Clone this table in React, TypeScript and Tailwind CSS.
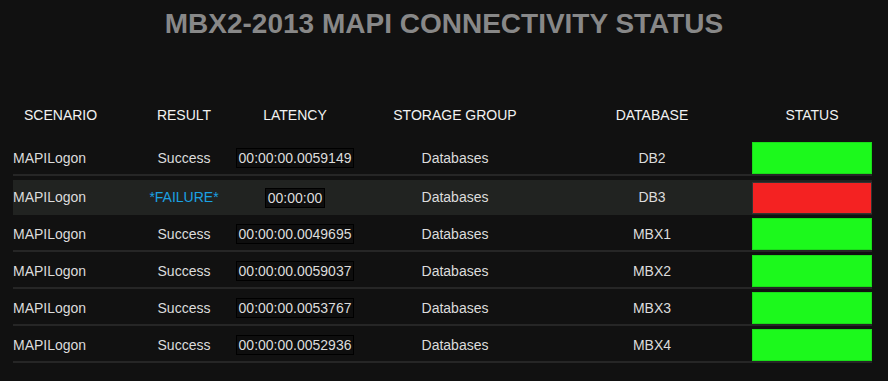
import React from 'react'

type Row = {
  scenario: string
  result: string
  latency: string
  group: string
  db: string
  ok: boolean
}

const rows: Row[] = [
  { scenario: 'MAPILogon', result: 'Success', latency: '00:00:00.0059149', group: 'Databases', db: 'DB2', ok: true },
  { scenario: 'MAPILogon', result: '*FAILURE*', latency: '00:00:00', group: 'Databases', db: 'DB3', ok: false },
  { scenario: 'MAPILogon', result: 'Success', latency: '00:00:00.0049695', group: 'Databases', db: 'MBX1', ok: true },
  { scenario: 'MAPILogon', result: 'Success', latency: '00:00:00.0059037', group: 'Databases', db: 'MBX2', ok: true },
  { scenario: 'MAPILogon', result: 'Success', latency: '00:00:00.0053767', group: 'Databases', db: 'MBX3', ok: true },
  { scenario: 'MAPILogon', result: 'Success', latency: '00:00:00.0052936', group: 'Databases', db: 'MBX4', ok: true },
]

// column widths: scenario, result, latency, storage group, database, status
const cols = 'grid grid-cols-[119px_104px_118px_202px_192px_124px]'

const Cells = ({ row }: { row: Row }) => (
  <>
    <div className="text-[#dcdcdc]">{row.scenario}</div>
    <div className={`text-center ${row.ok ? 'text-[#dcdcdc]' : 'text-[#1ba1e2]'}`}>{row.result}</div>
    <div className="flex justify-center">
      <span className="h-[20px] px-[2px] leading-[18px] border border-black bg-[#0e0e0e] text-[#dcdcdc]">
        {row.latency}
      </span>
    </div>
    <div className="text-center text-[#dcdcdc]">{row.group}</div>
    <div className="text-center text-[#dcdcdc]">{row.db}</div>
    <div className="flex justify-end">
      {row.ok ? (
        <div className="w-[120px] h-[32px] bg-[#1cf91c] border border-[#19dc19]" />
      ) : (
        <div className="w-[120px] h-[32px] bg-[#f42222] border border-[#333]" />
      )}
    </div>
  </>
)

export default function App() {
  return (
    <div
      className="w-[888px] h-[381px] bg-[#111111] overflow-hidden text-[14px]"
      style={{ fontFamily: '"Liberation Sans", Arial, sans-serif' }}
    >
      <h1 className="pt-[8px] text-center text-[28px] leading-[32px] font-bold text-[#888888]">
        MBX2-2013 MAPI CONNECTIVITY STATUS
      </h1>

      <div className="ml-[13px] w-[859px] mt-[67px]">
        <div className={`${cols} leading-[16px] pb-[16px] text-[#f2f2f2]`}>
          <div className="pl-[11px]">SCENARIO</div>
          <div className="text-center">RESULT</div>
          <div className="text-center">LATENCY</div>
          <div className="text-center">STORAGE GROUP</div>
          <div className="text-center">DATABASE</div>
          <div className="text-center pl-[4px]">STATUS</div>
        </div>

        {rows.map((row, i) =>
          row.ok ? (
            <div key={i} className={`${cols} items-center h-[37px] pt-[3px] border-b-2 border-[#262626]`}>
              <Cells row={row} />
            </div>
          ) : (
            <div key={i} className="pt-[4px]">
              <div className={`${cols} items-center h-[35px] bg-[#212321]`}>
                <Cells row={row} />
              </div>
            </div>
          )
        )}
      </div>
    </div>
  )
}
